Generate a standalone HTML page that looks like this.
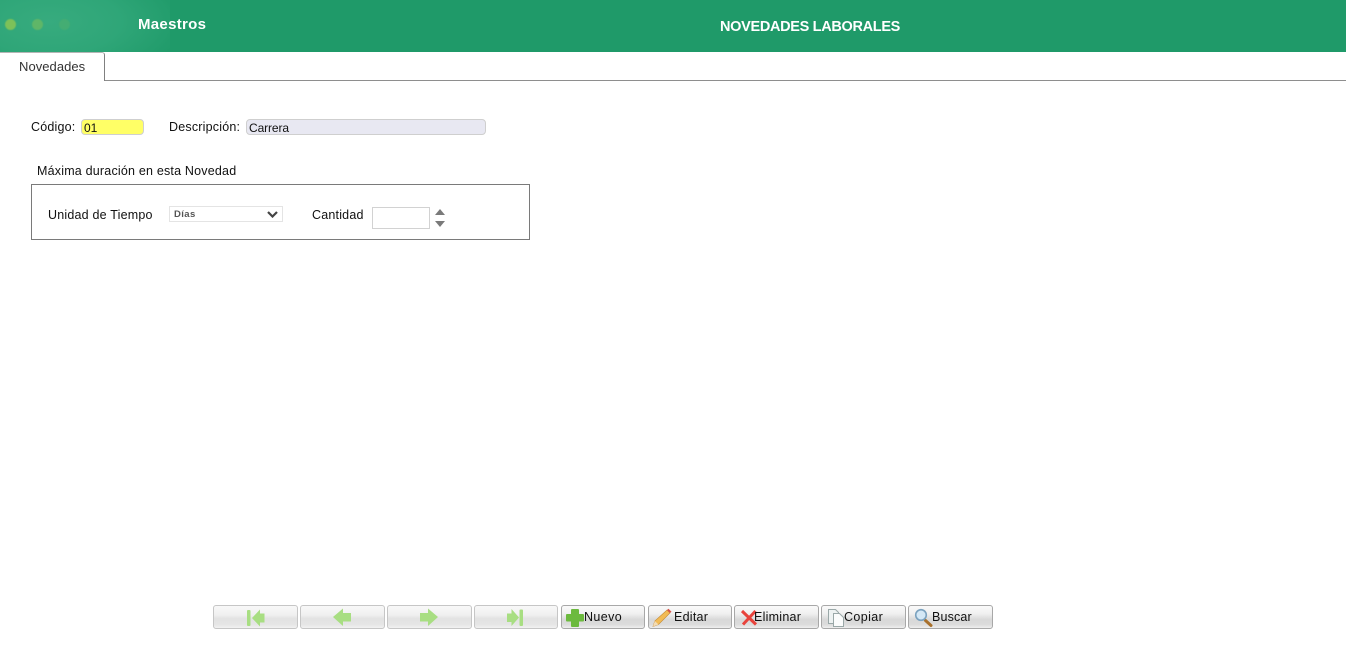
<!DOCTYPE html>
<html lang="es"><head><meta charset="utf-8"><title>Novedades Laborales</title>
<style>
html,body{margin:0;padding:0;width:1346px;height:658px;overflow:hidden;background:#fff;font-family:"Liberation Sans",sans-serif;color:#222}
.a{position:absolute;white-space:nowrap}
#hd{left:0;top:0;width:1346px;height:52px;background:#1f9a69}
#glow{left:0;top:0;width:170px;height:52px;background:radial-gradient(ellipse 140px 64px at 50px 22px,#37ab7e 0%,#2fa678 50%,#1f9a69 100%)}
.dot{width:11px;height:11px;border-radius:50%;top:18.500px;filter:blur(.6px)}
.lbl{font-size:12.500px;letter-spacing:.2px;line-height:14px;color:#111}
.b{position:absolute;top:605px;height:22px;border:1px solid #c6c6c6;border-radius:3px;background:linear-gradient(#f8f8f8 0%,#f0f0f0 40%,#e2e2e2 58%,#e6e6e6 85%,#f2f2f2 100%)}
.b.on{border-color:#a8a8a8;background:linear-gradient(#fafafa 0%,#f0f0f0 35%,#d8d8d8 62%,#dcdcdc 85%,#efefef 100%)}
.b span{position:absolute;top:4px;font-size:12.500px;line-height:14px;letter-spacing:.25px;color:#111}
.b svg{position:absolute;left:0;top:0;overflow:visible}
</style></head><body>
<div class="a" id="hd"></div><div class="a" id="glow"></div>
<div class="a dot" style="left:5px;background:#7cc159"></div>
<div class="a dot" style="left:32px;background:#5fb668"></div>
<div class="a dot" style="left:59px;background:#44ad73"></div>
<div class="a" style="left:138px;top:16px;font-size:15px;line-height:18px;font-weight:bold;color:#fff;letter-spacing:.3px">Maestros</div>
<div class="a" style="left:720px;top:18px;font-size:14.500px;line-height:18px;font-weight:bold;color:#fff;letter-spacing:-.32px">NOVEDADES LABORALES</div>

<div class="a" style="left:104px;top:80px;width:1242px;height:1px;background:#8e8e8e"></div>
<div class="a" style="left:0;top:52px;width:104px;height:28px;border-top:1px solid #b5b5b5;border-right:1px solid #808080;border-top-right-radius:3px;background:#fff"></div>
<div class="a" style="left:19px;top:59px;font-size:13px;line-height:16px;color:#333;letter-spacing:.05px">Novedades</div>

<div class="a lbl" style="left:31px;top:120px">Código:</div>
<div class="a" style="left:81px;top:119px;width:61px;height:14px;background:#ffff66;border:1px solid #cfcfcf;border-radius:4px"></div>
<div class="a" style="left:84px;top:121px;font-size:12px;line-height:14px;color:#111">01</div>
<div class="a lbl" style="left:169px;top:120px">Descripción:</div>
<div class="a" style="left:246px;top:119px;width:238px;height:14px;background:#e8e8f2;border:1px solid #cfcfcf;border-radius:4px"></div>
<div class="a" style="left:249px;top:121px;font-size:12px;line-height:14px;color:#111;letter-spacing:-.1px">Carrera</div>

<div class="a lbl" style="left:37px;top:164px">Máxima duración en esta Novedad</div>
<div class="a" style="left:31px;top:184px;width:497px;height:54px;border:1px solid #7a7a7a"></div>
<div class="a lbl" style="left:48px;top:208px">Unidad de Tiempo</div>
<div class="a" style="left:169px;top:206px;width:112px;height:14px;border:1px solid #e4e4e4;background:#fff"></div>
<div class="a" style="left:174px;top:209px;font-size:9.500px;line-height:11px;font-weight:bold;color:#555;letter-spacing:.4px">Días</div>
<svg class="a" style="left:267px;top:211px" width="11" height="7" viewBox="0 0 11 7"><path d="M1 1l4.500 4.500L10 1" fill="none" stroke="#444" stroke-width="2.200"/></svg>
<div class="a lbl" style="left:312px;top:208px">Cantidad</div>
<div class="a" style="left:372px;top:207px;width:56px;height:20px;border:1px solid #d2d2d2;background:#fff"></div>
<svg class="a" style="left:434px;top:208px" width="12" height="20" viewBox="0 0 12 20"><path d="M1 7L6 1l5 6z" fill="#7a7a7a"/><path d="M1 13h10l-5 6z" fill="#7a7a7a"/></svg>

<div class="b" style="left:213px;width:83px"><svg width="85" height="24"><rect x="33" y="4" width="3.500" height="16" rx="1" fill="#a8de82"/><path d="M38 12L46 3.500v4h4.500v9H46v4z" fill="#a8de82"/></svg></div>
<div class="b" style="left:300px;width:83px"><svg width="85" height="24"><path d="M32 11L42 2.500v4.500h8v8.500h-8V20z" fill="#a8de82"/></svg></div>
<div class="b" style="left:387px;width:83px"><svg width="85" height="24"><path d="M50 11L40 2.500v4.500h-8v8.500h8V20z" fill="#a8de82"/></svg></div>
<div class="b" style="left:474px;width:82px"><svg width="84" height="24"><path d="M32 7.500h4.500v-4.500L44 11.500 36.500 20v-4H32z" fill="#a8de82"/><rect x="44.500" y="3.500" width="3.500" height="16.500" rx="1" fill="#a8de82"/></svg></div>

<div class="b on" style="left:561px;width:82px"><svg width="84" height="24"><path d="M10 3h6a1 1 0 0 1 1 1v4h4a1 1 0 0 1 1 1v5.500a1 1 0 0 1-1 1h-4V20a1 1 0 0 1-1 1h-6a1 1 0 0 1-1-1v-4.500H5a1 1 0 0 1-1-1V9a1 1 0 0 1 1-1h4V4a1 1 0 0 1 1-1z" fill="#6cba3e"/></svg><span style="left:22px;letter-spacing:.4px">Nuevo</span></div>
<div class="b on" style="left:648px;width:82px"><svg width="84" height="24"><path d="M4 20.500l1.800-5.500L18 4l3 3L9.500 18.500z" fill="#f2bb55" stroke="#c48a35" stroke-width=".6"/><path d="M18 4l1.500-1.300 3 3L21 7z" fill="#d9534a"/><path d="M4 20.500l1.800-5.500 3.700 3.500z" fill="#f3dcb4"/></svg><span style="left:25px">Editar</span></div>
<div class="b on" style="left:734px;width:83px"><svg width="85" height="24"><path d="M7 5l14 13.500M20.500 5L8 18.500" fill="none" stroke="#e8433c" stroke-width="3"/></svg><span style="left:19px">Eliminar</span></div>
<div class="b on" style="left:821px;width:83px"><svg width="85" height="24"><path d="M6.500 3.500h7l3 3v11h-10z" fill="#eef2f2" stroke="#9aa8a8"/><path d="M11.500 7.500h6l4 4v9h-10z" fill="#fbfcfc" stroke="#9aa8a8"/></svg><span style="left:22px;letter-spacing:.4px">Copiar</span></div>
<div class="b on" style="left:908px;width:83px"><svg width="85" height="24"><path d="M16.500 14.500l5.500 5" stroke="#a8702c" stroke-width="3" stroke-linecap="round"/><circle cx="12" cy="9" r="5.300" fill="#d4e8f6" stroke="#7ba2bf" stroke-width="1.600"/></svg><span style="left:23px;letter-spacing:.15px">Buscar</span></div>
</body></html>
